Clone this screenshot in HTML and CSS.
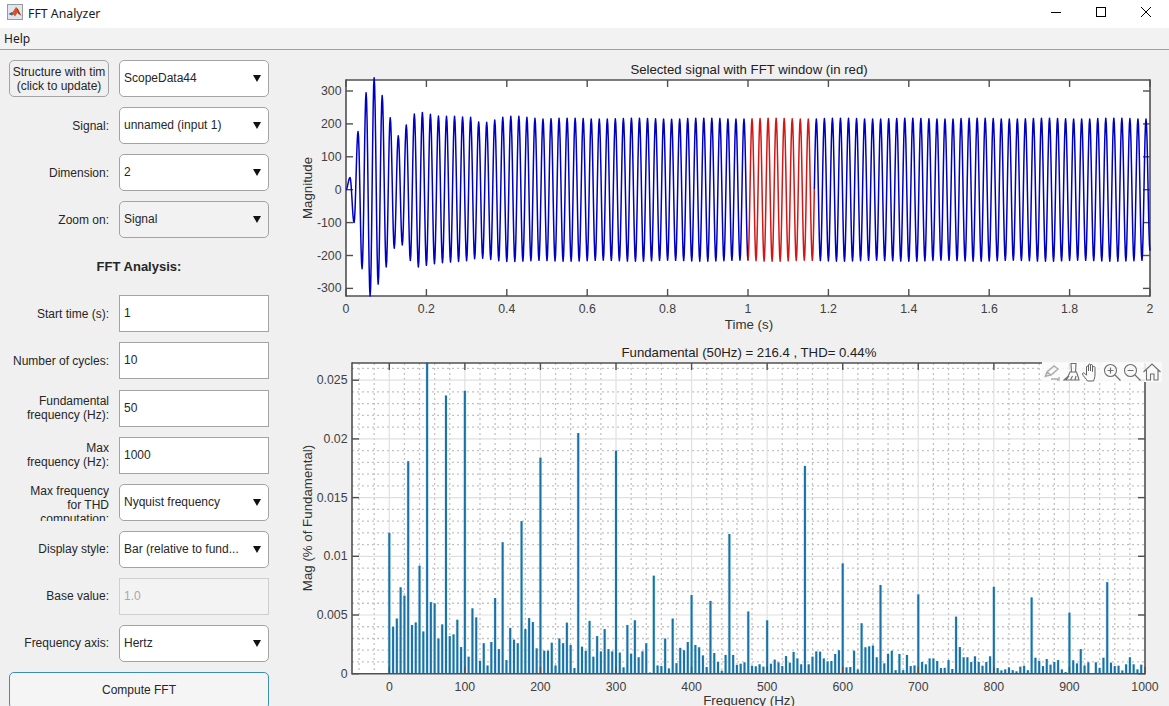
FILE: index.html
```html
<!DOCTYPE html>
<html lang="en">
<head>
<meta charset="utf-8">
<title>FFT Analyzer</title>
<link rel="stylesheet" href="styles.css">
</head>
<body>
<div class="app">
  <header class="titlebar">
    <svg class="appicon" viewBox="0 0 16 16" aria-hidden="true">
      <rect x="0.5" y="0.5" width="15" height="15" fill="#dfe6ee" stroke="#9a9a9a"/>
      <polygon points="1.5,10 5,8 7,9.5 5,11.5" fill="#3a5f8f"/>
      <polygon points="5,9 9,3 11,8 8,12.5" fill="#d9541e"/>
      <polygon points="9,3 11,5 14.5,12 11,9.5" fill="#a8321a"/>
    </svg>
    <span class="apptitle">FFT Analyzer</span>
    <div class="winctl">
      <svg class="winbtn" viewBox="0 0 10 10" aria-hidden="true"><path d="M0 5.5H10" stroke="#000" fill="none"/></svg>
      <svg class="winbtn" viewBox="0 0 10 10" aria-hidden="true"><rect x="0.5" y="0.5" width="9" height="9" stroke="#000" fill="none"/></svg>
      <svg class="winbtn" viewBox="0 0 10 10" aria-hidden="true"><path d="M0 0L10 10M10 0L0 10" stroke="#000" fill="none"/></svg>
    </div>
  </header>
  <nav class="menubar"><span>Help</span></nav>
  <main class="main">
    <section class="panel">
      <div class="row">
        <div class="updatebtn">Structure with tim<br>(click to update)</div>
        <div class="combo">ScopeData44</div>
      </div>
      <div class="row"><div class="label">Signal:</div><div class="combo">unnamed (input 1)</div></div>
      <div class="row"><div class="label">Dimension:</div><div class="combo">2</div></div>
      <div class="row"><div class="label">Zoom on:</div><div class="combo combo-grey">Signal</div></div>
      <div class="heading">FFT Analysis:</div>
      <div class="row"><div class="label">Start time (s):</div><div class="field">1</div></div>
      <div class="row"><div class="label">Number of cycles:</div><div class="field">10</div></div>
      <div class="row"><div class="label">Fundamental<br>frequency (Hz):</div><div class="field">50</div></div>
      <div class="row"><div class="label">Max<br>frequency (Hz):</div><div class="field">1000</div></div>
      <div class="row"><div class="label label-clip">Max frequency<br>for THD<br>computation:</div><div class="combo">Nyquist frequency</div></div>
      <div class="row"><div class="label">Display style:</div><div class="combo">Bar (relative to fund...</div></div>
      <div class="row"><div class="label">Base value:</div><div class="field field-off">1.0</div></div>
      <div class="row"><div class="label">Frequency axis:</div><div class="combo">Hertz</div></div>
      <div class="compute">Compute FFT</div>
    </section>
    <section class="plots">
      <svg id="signal" class="plot plot-top" viewBox="290 50 879 290"></svg>
      <div class="fftwrap">
        <svg id="fft" class="plot plot-bottom" viewBox="290 340 879 366"></svg>
        <div class="axtools">
          <svg class="axtool" viewBox="0 0 20 20" aria-hidden="true"><path d="M3 15l2-5 7-6 4 3-7 6-5 1zM5 10l4 3M9 17h7M17 15v3h-2" fill="none" stroke="#ababab" stroke-width="1.4"/></svg>
          <svg class="axtool" viewBox="0 0 20 20" aria-hidden="true"><path d="M9 1.500h5l-.5 8.500h-4zM8 10h6.500l1.500 4.500 1 3.500H2l4-3.500zM7 14l-3 4M10.500 14l-2 4M14 14l-1 4" fill="none" stroke="#6e6e6e" stroke-width="1.1"/></svg>
          <svg class="axtool" viewBox="0 0 20 20" aria-hidden="true"><path d="M5.500 19c-1-2-4.500-5-5-7-.2-1 1-1.500 2-.8l2 2V5c0-1.300 2-1.300 2 0v4-6c0-1.300 2-1.300 2 0v6-5.500c0-1.300 2-1.300 2 0V9.500 5.500c0-1.300 2.500-1.300 2.500 0V13c0 2-.8 4-1.500 6z" fill="#fbfbfb" stroke="#606060" stroke-width="1"/></svg>
          <svg class="axtool" viewBox="0 0 20 20" aria-hidden="true"><circle cx="8.500" cy="8.500" r="6" fill="none" stroke="#707070" stroke-width="1.1"/><path d="M5.500 8.500h6M8.500 5.500v6M13 13l5.500 5.500" fill="none" stroke="#707070" stroke-width="1.2"/></svg>
          <svg class="axtool" viewBox="0 0 20 20" aria-hidden="true"><circle cx="8.500" cy="8.500" r="6" fill="none" stroke="#707070" stroke-width="1.1"/><path d="M5.500 8.500h6M13 13l5.500 5.500" fill="none" stroke="#707070" stroke-width="1.2"/></svg>
          <svg class="axtool" viewBox="0 0 20 20" aria-hidden="true"><path d="M1.500 10L10 2l8.500 8M4.500 8v10h4v-6h3.500v6h4V8" fill="none" stroke="#707070" stroke-width="1.1"/></svg>
        </div>
      </div>
    </section>
  </main>
</div>
<script src="charts.js"></script>
</body>
</html>
```

FILE: styles.css
```css
* { box-sizing: border-box; }
html, body { margin: 0; height: 100%; overflow: hidden; }
body { font-family: "Liberation Sans", Arial, sans-serif; font-size: 12px; color: #262626; background: #f0f0f0; }
.app { width: 1169px; height: 706px; display: flex; flex-direction: column; overflow: hidden; }

.titlebar { height: 28px; flex: none; background: #fff; display: flex; align-items: center; padding-left: 7px; }
.appicon { width: 16px; height: 16px; margin-top: -4px; flex: none; }
.apptitle { font-family: "Noto Sans", sans-serif; font-size: 12.300px; margin-left: 5px; margin-top: -2px; color: #1a1a1a; }
.winctl { margin-left: auto; display: flex; gap: 35px; padding-right: 18px; margin-top: -4px; }
.winbtn { width: 10px; height: 10px; display: block; }

.menubar { height: 22px; flex: none; background: #f2f2f2; border-bottom: 1px solid #a0a0a0; padding-left: 4px; display: flex; align-items: center; font-family: "Noto Sans", sans-serif; font-size: 12px; color: #1a1a1a; }

.main { flex: 1; display: flex; min-height: 0; }
.panel { width: 290px; flex: none; padding: 10px 0 0 9px; display: flex; flex-direction: column; gap: 10.08px; }
.row { display: grid; grid-template-columns: 100px 150px; column-gap: 10px; height: 37px; flex: none; align-items: center; }
.label { text-align: right; line-height: 14px; }
.label-clip { height: 37px; overflow: hidden; }
.heading { width: 260px; height: 37px; flex: none; font-size: 13px; font-weight: bold; text-align: center; line-height: 37px; }

.updatebtn { height: 37px; width: 100px; padding-top: 4px; border: 1px solid #a3a3a3; border-radius: 5px; background: #f0f0f0; text-align: center; line-height: 14px; white-space: nowrap; overflow: hidden; }
.combo { position: relative; height: 37px; padding: 0 30px 0 4px; line-height: 35px; background: #fff; border: 1px solid #a3a3a3; border-radius: 5px; white-space: nowrap; overflow: hidden; }
.combo::after { content: ""; position: absolute; right: 7px; top: 14px; border-left: 4.500px solid transparent; border-right: 4.500px solid transparent; border-top: 7px solid #111; }
.combo-grey { background: #f2f2f2; }
.field { height: 37px; padding-left: 4px; line-height: 35px; background: #fff; border: 1px solid #a3a3a3; }
.field-off { background: #f3f3f3; border-color: #cfcfcf; color: #a8a8a8; }
.compute { width: 260px; height: 37px; flex: none; line-height: 34px; text-align: center; background: #f5f5f5; border: 1px solid #3c8dbc; border-radius: 5px; }

.plots { flex: 1; display: flex; flex-direction: column; min-width: 0; }
.plot { display: block; width: 879px; }
.plot-top { height: 290px; flex: none; }
.fftwrap { position: relative; height: 366px; flex: none; }
.plot-bottom { height: 366px; }
.axtools { position: absolute; left: 752px; top: 22px; display: flex; }
.axtool { width: 20px; height: 20px; display: block; background: rgba(250, 250, 250, 0.85); }

.tick { font: 12.300px "Liberation Sans", Arial, sans-serif; fill: #404040; }
.axlabel { font: 13.300px "Liberation Sans", Arial, sans-serif; fill: #333; }
.axtitle { font: 13.200px "Liberation Sans", Arial, sans-serif; fill: #222; }
```

FILE: charts.js
```js
(function () {
  var NS = 'http://www.w3.org/2000/svg';

  function el(parent, name, attrs, text) {
    var node = document.createElementNS(NS, name);
    Object.keys(attrs).forEach(function (k) { node.setAttribute(k, attrs[k]); });
    if (text !== undefined) node.textContent = text;
    parent.appendChild(node);
    return node;
  }
  function line(parent, x1, y1, x2, y2, stroke, width, dash) {
    var attrs = { x1: x1, y1: y1, x2: x2, y2: y2, stroke: stroke, 'stroke-width': width };
    if (dash) attrs['stroke-dasharray'] = dash;
    return el(parent, 'line', attrs);
  }
  var AXIS = '#505050';

  function frame(svg, box, xTicks, yTicks, skipTopFrom) {
    var g = el(svg, 'g', {});
    var right = skipTopFrom || box.r;
    line(g, box.l, box.t, right, box.t, AXIS, 1.6);
    line(g, box.l, box.b, box.r, box.b, AXIS, 1.6);
    line(g, box.l, box.t - 0.8, box.l, box.b + 0.8, AXIS, 1.6);
    line(g, box.r, skipTopFrom ? box.t + 19 : box.t - 0.8, box.r, box.b + 0.8, AXIS, 1.6);
    xTicks.forEach(function (t) {
      line(g, t.x, box.b, t.x, box.b - 7, AXIS, 1.4);
      line(g, t.x, box.t, t.x, box.t + 7, AXIS, 1.4);
      el(g, 'text', { class: 'tick', x: t.x, y: box.b + 17, 'text-anchor': 'middle' }, t.label);
    });
    yTicks.forEach(function (t) {
      line(g, box.l, t.y, box.l + 7, t.y, AXIS, 1.4);
      line(g, box.r, t.y, box.r - 7, t.y, AXIS, 1.4);
      el(g, 'text', { class: 'tick', x: box.l - 4.500, y: t.y + 4, 'text-anchor': 'end' }, t.label);
    });
  }

  /* ---------- time-domain signal: extremes at every 10 ms ---------- */
  var sig = document.getElementById('signal');
  var a1 = { l: 346, r: 1150, t: 80, b: 296 };
  var tx = function (t) { return a1.l + t * (a1.r - a1.l) / 2; };
  var vy = function (v) { return 189.7 - v * 0.329; };

  var extremes = [0, 37, -100, 177, -240, 295, -323, 340, -287, 286, -235, 219, -178, 164, -168, 197,
    -215, 230, -235, 235, -230, 229, -225, 224, -222, 223, -220, 223, -218, 221, -216, 220, -210, 206,
    -208, 205, -212, 212, -216, 220, -218, 223, -218, 223, -217, 220, -216, 217];
  for (var k = extremes.length; k <= 200; k++) {
    extremes.push((k % 2 ? 1 : -1) * (216 + 1.5 * Math.sin(k * 0.37)));
  }
  extremes[200] = -185;

  function wavePath(t0, t1) {
    var d = '';
    var steps = 8;
    for (var i = 0; i < 200; i++) {
      for (var s = 0; s <= steps; s++) {
        var t = (i + s / steps) * 0.01;
        if (t < t0 - 1e-9 || t > t1 + 1e-9) continue;
        var w = (1 - Math.cos(Math.PI * s / steps)) / 2;
        var v = extremes[i] + (extremes[i + 1] - extremes[i]) * w;
        d += (d ? 'L' : 'M') + tx(t).toFixed(2) + ' ' + vy(v).toFixed(2);
      }
    }
    return d;
  }

  el(sig, 'rect', { x: a1.l, y: a1.t, width: a1.r - a1.l, height: a1.b - a1.t, fill: '#fff' });
  var xt1 = [];
  for (var i = 0; i <= 10; i++) {
    xt1.push({ x: tx(i * 0.2), label: String(Math.round(i * 2) / 10) });
  }
  var yt1 = [];
  for (var v = -300; v <= 300; v += 100) yt1.push({ y: vy(v), label: v < 0 ? '-' + (-v) : String(v) });
  frame(sig, a1, xt1, yt1);
  var waveAttrs = function (d, colour) {
    return { d: d, fill: 'none', stroke: colour, 'stroke-width': 1.5, 'stroke-linejoin': 'round' };
  };
  el(sig, 'path', waveAttrs(wavePath(0, 1.0), '#0000c0'));
  el(sig, 'path', waveAttrs(wavePath(1.165, 2), '#0000c0'));
  el(sig, 'path', waveAttrs(wavePath(1.0, 1.165), '#d01818'));
  el(sig, 'text', { class: 'axtitle', x: 749, y: 73.5, 'text-anchor': 'middle' }, 'Selected signal with FFT window (in red)');
  el(sig, 'text', { class: 'axlabel', x: 749, y: 329, 'text-anchor': 'middle' }, 'Time (s)');
  el(sig, 'text', { class: 'axlabel', x: 0, y: 0, 'text-anchor': 'middle', transform: 'translate(312 188) rotate(-90)' }, 'Magnitude');

  /* ---------- spectrum: one bar every 5 Hz ---------- */
  var fft = document.getElementById('fft');
  var a2 = { l: 352, r: 1145, t: 363, b: 673.7 };
  var fx = function (f) { return 389.3 + f * 0.7557; };
  var my = function (m) { return a2.b - m * 11740; };

  var bars = [
    .012, .004, .0047, .00736, .00665, .0181, .00415, .00437, .0092, .0036,
    .0265, .0061, .006, .003, .0042, .0237, .0032, .00335, .0046, .00227,
    .0241, .00145, .00557, .0048, .0011, .0026, .0007, .0027, .00645, .0021,
    .0112, .00116, .0039, .0029, .0026, .013, .0038, .00474, .0044, .00216,
    .0184, .00196, .00196, .00264, .0007, .003, .0026, .00435, .00244, .00048,
    .0205, .0023, .00196, .0045, .00145, .0032, .0019, .0038, .0021, .0019,
    .019, .0018, .00054, .00415, .0017, .00455, .0014, .0019, .0026, .0001,
    .00835, .0007, .00065, .003, .00045, .0047, .0009, .0022, .002, .0027,
    .0067, .00245, .00225, .00156, .00057, .0062, .00176, .001, .00026, .0016,
    .0119, .0016, .00074, .00085, .00097, .0053, .00068, .00063, .0008, .0006,
    .00455, .00085, .0012, .00097, .00065, .0015, .00094, .00185, .0013, .0008,
    .0177, .0008, .00145, .0019, .00188, .0013, .00105, .00108, .00168, .002,
    .0094, .00054, .00057, .00196, .00037, .0043, .00225, .00233, .0024, .0014,
    .00756, .00088, .00168, .00196, .0003, .00168, .0003, .0016, .00065, .0007,
    .00676, .001, .0008, .0013, .0013, .00108, .00048, .0005, .00116, .0004,
    .00486, .00227, .0014, .0014, .001, .00148, .001, .00068, .001, .00148,
    .0074, .00048, .00028, .00037, .00054, .0003, .0002, .0006, .00068, .0003,
    .0065, .00136, .0011, .00065, .00125, .00077, .001, .00116, .00037, .00014,
    .0052, .00114, .00088, .0021, .0007, .00097, .00002, .00097, .0005, .00136,
    .0078, .00094, .00065, .00068, .00028, .0008, .0014, .0008, .00037, .00077
  ];

  el(fft, 'rect', { x: a2.l, y: a2.t, width: a2.r - a2.l, height: a2.b - a2.t, fill: '#fff' });
  var grid = el(fft, 'g', {});
  var f, m;
  for (f = -40; f <= 1000; f += 20) {
    if (f % 100 !== 0) line(grid, fx(f), a2.t, fx(f), a2.b, '#c2c2c2', 1.3, '2 3');
  }
  for (m = 1; m <= 26; m++) {
    if (m % 5 !== 0) line(grid, a2.l, my(m / 1000), a2.r, my(m / 1000), '#c2c2c2', 1.3, '2 3');
  }
  for (f = 0; f <= 900; f += 100) line(grid, fx(f), a2.t, fx(f), a2.b, '#e0e0e0', 1.2);
  for (m = 5; m <= 25; m += 5) line(grid, a2.l, my(m / 1000), a2.r, my(m / 1000), '#e0e0e0', 1.2);

  var halo = el(fft, 'g', {});
  var barGroup = el(fft, 'g', {});
  bars.forEach(function (val, idx) {
    var x = fx(idx * 5);
    var top = my(val);
    var h = a2.b - top;
    el(halo, 'rect', { x: (x - 1.6).toFixed(2), y: top.toFixed(2), width: 3.2, height: h.toFixed(2), fill: '#cdeaf7' });
    el(barGroup, 'rect', { x: (x - 1).toFixed(2), y: top.toFixed(2), width: 2, height: h.toFixed(2), fill: '#1d70a2' });
  });

  var xt2 = [];
  for (f = 0; f <= 1000; f += 100) xt2.push({ x: fx(f), label: String(f) });
  var yt2 = [];
  ['0', '0.005', '0.01', '0.015', '0.02', '0.025'].forEach(function (label) {
    yt2.push({ y: my(parseFloat(label)), label: label });
  });
  frame(fft, a2, xt2, yt2, 1042);
  el(fft, 'text', { class: 'axtitle', x: 749, y: 357, 'text-anchor': 'middle' }, 'Fundamental (50Hz) = 216.4 , THD= 0.44%');
  el(fft, 'text', { class: 'axlabel', x: 749, y: 705, 'text-anchor': 'middle' }, 'Frequency (Hz)');
  el(fft, 'text', { class: 'axlabel', x: 0, y: 0, 'text-anchor': 'middle', transform: 'translate(312 518) rotate(-90)' }, 'Mag (% of Fundamental)');
})();
```
